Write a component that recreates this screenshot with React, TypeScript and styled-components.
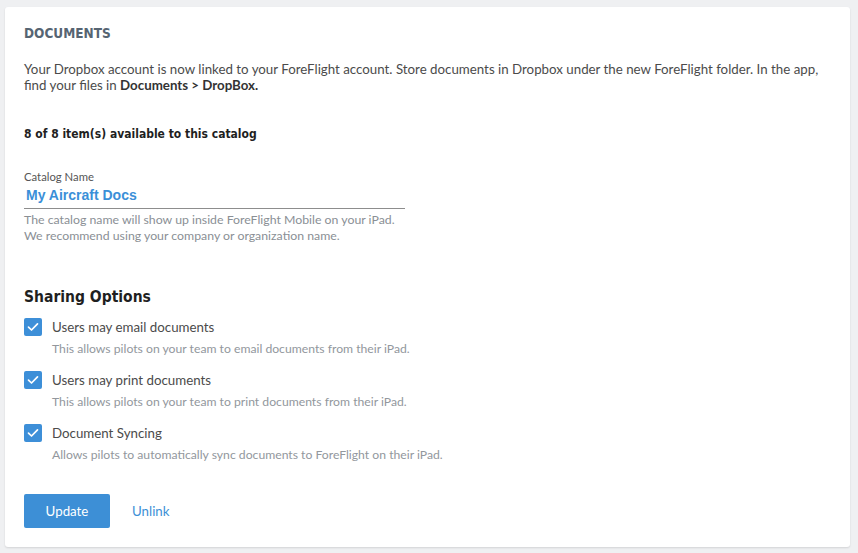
import React from "react";
import styled, { createGlobalStyle } from "styled-components";

const Global = createGlobalStyle`
  html, body { margin: 0; padding: 0; background: #eff0f2; }
  body { font-family: Lato, "Open Sans", sans-serif; }
  * { box-sizing: border-box; }
`;

const Page = styled.div`
  width: 858px;
  height: 553px;
  padding: 7px 8px 6px 5px;
`;

const Card = styled.section`
  background: #fff;
  border-radius: 3px;
  box-shadow: 0 1px 2px rgba(0, 0, 0, 0.12);
  height: 540px;
  padding: 18px 19px 0 19px;
  display: flex;
  flex-direction: column;
`;

const Title = styled.h2`
  margin: 0;
  font-family: "DejaVu Sans Condensed", "DejaVu Sans", sans-serif;
  font-weight: bold;
  font-size: 13.5px;
  letter-spacing: 0;
  color: #566472;
  line-height: 16px;
`;

const Intro = styled.p`
  margin: 20px 0 0;
  font-size: 13.3px;
  line-height: 16px;
  color: #4b4b4b;
  b { color: #333; font-weight: bold; }
`;

const Count = styled.h3`
  margin: 33px 0 0;
  font-family: "DejaVu Sans Condensed", "DejaVu Sans", sans-serif;
  font-weight: bold;
  font-size: 12px;
  line-height: 16px;
  color: #1f1f1f;
`;

const Field = styled.div`
  margin-top: 28px;
  width: 381px;
  display: flex;
  flex-direction: column;
`;

const Label = styled.label`
  font-size: 11.3px;
  line-height: 13px;
  color: #555;
`;

const Input = styled.input`
  border: none;
  border-bottom: 1px solid #8d8d8d;
  outline: none;
  padding: 0 0 3px 2px;
  margin-top: 2px;
  height: 24px;
  font-family: "Liberation Sans", Arial, sans-serif;
  font-weight: bold;
  font-size: 14px;
  color: #3a8fd8;
  background: transparent;
`;

const Help = styled.p`
  margin: 3px 0 0;
  font-size: 12.3px;
  line-height: 16px;
  color: #8a8f95;
  width: 440px;
`;

const SectionTitle = styled.h3`
  margin: 43px 0 0;
  font-family: "DejaVu Sans Condensed", "DejaVu Sans", sans-serif;
  font-weight: bold;
  font-size: 15.5px;
  line-height: 20px;
  color: #1f1f1f;
`;

const Options = styled.div`
  display: flex;
  flex-direction: column;
  gap: 14px;
  margin-top: 11px;
`;

const Option = styled.div`
  display: grid;
  grid-template-columns: 18px 1fr;
  column-gap: 10px;
  row-gap: 5px;
  align-items: center;
`;

const Box = styled.span`
  width: 18px;
  height: 18px;
  border-radius: 2px;
  background: #3d8fd8;
  display: flex;
  align-items: center;
  justify-content: center;
`;

const OptLabel = styled.span`
  font-size: 13.3px;
  line-height: 18px;
  color: #4b4b4b;
`;

const OptDesc = styled.span`
  grid-column: 2;
  font-size: 12.2px;
  line-height: 16px;
  color: #92979d;
`;

const Actions = styled.div`
  margin-top: 31px;
  display: flex;
  align-items: center;
  gap: 22px;
`;

const Button = styled.button`
  width: 86px;
  height: 34px;
  border: none;
  border-radius: 2px;
  background: #3d8fd6;
  color: #fff;
  font-family: Lato, "Open Sans", sans-serif;
  font-size: 13.3px;
`;

const LinkBtn = styled.a`
  font-size: 13.3px;
  color: #3d8fd6;
  text-decoration: none;
`;

const Check = () => (
  <svg width="12" height="10" viewBox="0 0 12 10">
    <path d="M1.5 5.2 L4.5 8 L10.5 1.8" stroke="#fff" strokeWidth="1.7" fill="none" strokeLinecap="round" strokeLinejoin="round" />
  </svg>
);

const options = [
  ["Users may email documents", "This allows pilots on your team to email documents from their iPad."],
  ["Users may print documents", "This allows pilots on your team to print documents from their iPad."],
  ["Document Syncing", "Allows pilots to automatically sync documents to ForeFlight on their iPad."],
];

export default function App() {
  return (
    <Page>
      <Global />
      <Card>
        <Title>DOCUMENTS</Title>
        <Intro>
          Your Dropbox account is now linked to your ForeFlight account. Store documents in Dropbox under the new ForeFlight folder. In the app, find your files in <b>Documents &gt; DropBox.</b>
        </Intro>
        <Count>8 of 8 item(s) available to this catalog</Count>
        <Field>
          <Label>Catalog Name</Label>
          <Input defaultValue="My Aircraft Docs" />
        </Field>
        <Help>
          The catalog name will show up inside ForeFlight Mobile on your iPad.
          <br />
          We recommend using your company or organization name.
        </Help>
        <SectionTitle>Sharing Options</SectionTitle>
        <Options>
          {options.map(([l, d]) => (
            <Option key={l}>
              <Box><Check /></Box>
              <OptLabel>{l}</OptLabel>
              <OptDesc>{d}</OptDesc>
            </Option>
          ))}
        </Options>
        <Actions>
          <Button>Update</Button>
          <LinkBtn href="#">Unlink</LinkBtn>
        </Actions>
      </Card>
    </Page>
  );
}
